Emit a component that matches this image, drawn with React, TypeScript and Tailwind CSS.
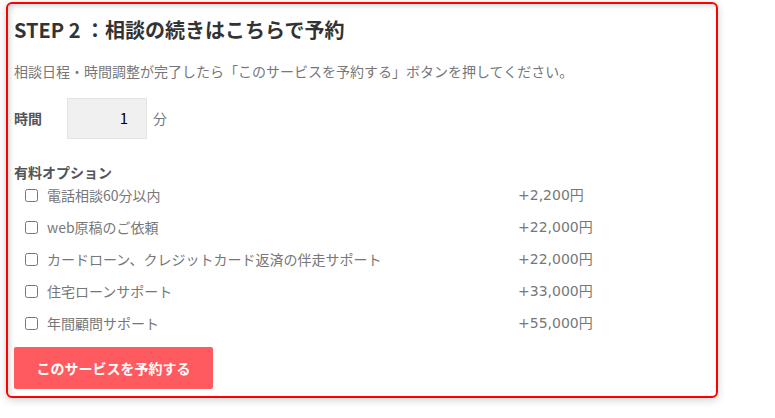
const OPTIONS = [
  { label: "電話相談60分以内", price: "+2,200円" },
  { label: "web原稿のご依頼", price: "+22,000円" },
  { label: "カードローン、クレジットカード返済の伴走サポート", price: "+22,000円" },
  { label: "住宅ローンサポート", price: "+33,000円" },
  { label: "年間顧問サポート", price: "+55,000円" },
];

export default function App() {
  return (
    <div className="h-[418px] w-[775px] bg-white pl-[6px] pt-[2px] font-['Meiryo','Noto_Sans_CJK_JP',sans-serif]">
      <div className="flex h-[396px] w-[712px] flex-col rounded-[6px] border-2 border-[#ff0000] bg-white pl-[6px] shadow-[0_2px_8px_rgba(0,0,0,0.18),inset_4px_4px_5px_-2px_rgba(0,0,0,0.16)]">
        <h2 className="mt-[13px] text-[20px] font-bold leading-[26px] text-[#333]">
          STEP 2 ：相談の続きはこちらで予約
        </h2>
        <p className="mt-[18px] text-[14px] leading-[20px] text-[#777]">
          相談日程・時間調整が完了したら「このサービスを予約する」ボタンを押してください。
        </p>
        <div className="mt-[17px] flex items-center">
          <span className="w-[53px] text-[14px] font-bold text-[#555]">時間</span>
          <div className="flex h-[41px] w-[80px] items-center justify-end border border-[#e3e3e3] bg-[#f0f0f0] pr-[18px] text-[15px] text-black">
            1
          </div>
          <span className="ml-[6px] text-[14px] text-[#777]">分</span>
        </div>
        <div className="mt-[26px] text-[14px] font-bold leading-[14px] text-[#555]">有料オプション</div>
        <ul className="flex flex-col">
          {OPTIONS.map((o) => (
            <li key={o.label} className="flex h-[32px] items-center text-[14px] text-[#777]">
              <input type="checkbox" className="ml-[11px] h-[13px] w-[13px]" />
              <span className="ml-[9px] w-[471px]">{o.label}</span>
              <span className="font-['DejaVu_Sans','Noto_Sans_CJK_JP',sans-serif]">{o.price}</span>
            </li>
          ))}
        </ul>
        <button className="mt-[8px] h-[42px] w-[199px] rounded-[2px] bg-[#ff5a5f] text-[14px] font-bold text-white">
          このサービスを予約する
        </button>
      </div>
    </div>
  );
}
